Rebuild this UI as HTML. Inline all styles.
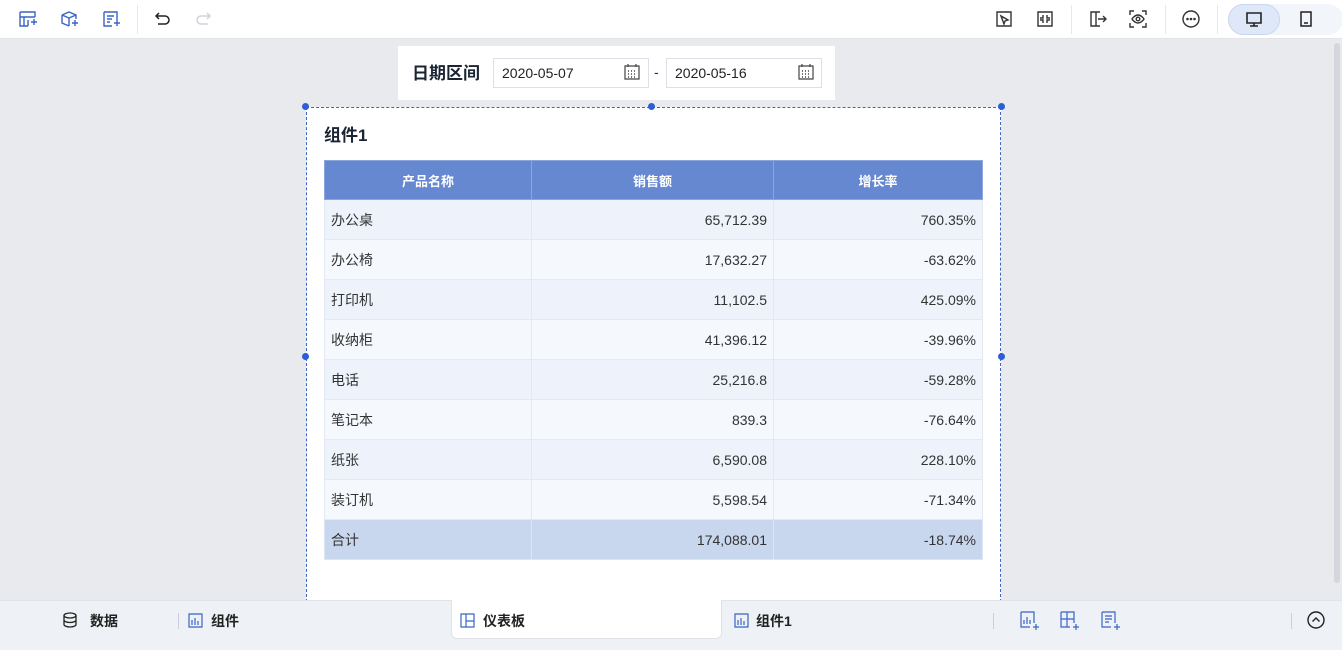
<!DOCTYPE html>
<html><head><meta charset="utf-8"><style>
*{margin:0;padding:0;box-sizing:border-box}
body{width:1342px;height:650px;overflow:hidden;background:#e9eaed;font-family:"Liberation Sans","Noto Sans CJK SC",sans-serif;position:relative;color:#1f2d3d}
.abs{position:absolute}
#top{left:0;top:0;width:1342px;height:39px;background:#fff;border-bottom:1px solid #e2e4e8}
.ic{position:absolute;top:10px;width:18px;height:18px}
.sep{position:absolute;top:5px;width:1px;height:29px;background:#e6e8ec}
#filter{left:398px;top:46px;width:437px;height:54px;background:#fff}
.inp{position:absolute;top:12px;height:30px;border:1px solid #dcdfe6;background:#fff;font-size:14px;line-height:28px;padding-left:8px;color:#222}
#comp{left:306px;top:107px;width:695px;height:500px;background:#fff;border:1px dashed #3f66c6;border-bottom:none}
.dot{position:absolute;width:7px;height:7px;border-radius:50%;background:#2b5fd9}
table{position:absolute;left:324px;top:160px;border-collapse:collapse;font-size:14px;color:#333}
td,th{height:40px;border:1px solid #e3e9f4;padding:0 6px}
th{background:#6688d1;color:#fff;font-weight:bold;font-size:13px;height:39px;border-color:#8ba5dd}
tr.a td{background:#edf2fb}tr.b td{background:#f5f8fd}tr.t td{background:#c8d6ee;border-color:#dde6f5}
td.r{text-align:right}
#bot{left:0;top:600px;width:1342px;height:50px;background:#eef1f5;border-top:1px solid #dfe3e8}
.bt{position:absolute;top:10px;font-size:14px;font-weight:bold;color:#222;line-height:20px}
</style></head><body>
<div id="top" class="abs">
<svg class="ic" style="left:19px" viewBox="0 0 18 18" fill="none" stroke="#3a64c8" stroke-width="1.4"><path d="M1 2h15v5M1 2v14h8M1 7h15M5 7v9M9 10v6M12 12h6M15 9v6"/></svg>
<svg class="ic" style="left:60px" viewBox="0 0 18 18" fill="none" stroke="#3a64c8" stroke-width="1.4"><path d="M2 5l7-3 7 3v4M2 5v8l7 3M2 5l7 3 7-3M9 8v8M12 13h6M15 10v6"/></svg>
<svg class="ic" style="left:102px" viewBox="0 0 18 18" fill="none" stroke="#3a64c8" stroke-width="1.4"><path d="M2 2h13v8M2 2v14h8M5 6h7M5 9h5M5 12h3M12 13h6M15 10v6"/></svg>
<div class="sep" style="left:137px"></div>
<svg class="ic" style="left:154px" viewBox="0 0 18 18" fill="none" stroke="#222" stroke-width="1.5"><path d="M5 3L2 6l3 3M2 6h9a4 4 0 010 8H4"/></svg>
<svg class="ic" style="left:194px" viewBox="0 0 18 18" fill="none" stroke="#cfd3da" stroke-width="1.5"><path d="M13 3l3 3-3 3M16 6H7a4 4 0 000 8h7"/></svg>
<svg class="ic" style="left:995px" viewBox="0 0 18 18" fill="none" stroke="#333" stroke-width="1.4"><path d="M2 2h14v14H2zM6 6l3 8 1-3 3-1z"/></svg>
<svg class="ic" style="left:1036px" viewBox="0 0 18 18" fill="none" stroke="#333" stroke-width="1.4"><path d="M2 2h14v14H2zM7 5v3H4M11 5v3h3M7 13v-3H4M11 13v-3h3"/></svg>
<div class="sep" style="left:1071px"></div>
<svg class="ic" style="left:1089px" viewBox="0 0 18 18" fill="none" stroke="#333" stroke-width="1.4"><path d="M2 2h5v14H2zM7 2h4M7 16h4M9 9h8M14 6l3 3-3 3"/></svg>
<svg class="ic" style="left:1129px" viewBox="0 0 18 18" fill="none" stroke="#333" stroke-width="1.4"><path d="M1 5V1h4M13 1h4v4M1 13v4h4M13 17h4v-4M3 9s2.5-4 6-4 6 4 6 4-2.5 4-6 4-6-4-6-4z"/><circle cx="9" cy="9" r="1.8"/></svg>
<div class="sep" style="left:1165px"></div>
<svg class="ic" style="left:1182px" viewBox="0 0 18 18" fill="none" stroke="#333" stroke-width="1.4"><circle cx="9" cy="9" r="8"/><circle cx="5.5" cy="9" r=".6" fill="#333"/><circle cx="9" cy="9" r=".6" fill="#333"/><circle cx="12.5" cy="9" r=".6" fill="#333"/></svg>
<div class="sep" style="left:1217px"></div>
<div class="abs" style="left:1228px;top:4px;width:115px;height:31px;border-radius:16px;background:#f2f5fa"></div>
<div class="abs" style="left:1228px;top:4px;width:52px;height:31px;border-radius:16px;background:#dfe8f8;border:1px solid #c8d6f0"></div>
<svg class="ic" style="left:1245px" viewBox="0 0 18 18" fill="none" stroke="#222" stroke-width="1.6"><path d="M2 3h14v10H2zM9 13v3M5 16h8"/></svg>
<svg class="ic" style="left:1297px" viewBox="0 0 18 18" fill="none" stroke="#222" stroke-width="1.5"><path d="M4 2h10v14H4zM7 13h4"/></svg>
</div>
<div class="abs" style="left:1334px;top:43px;width:6px;height:540px;background:#d3d6da;border-radius:3px"></div>

<div id="filter" class="abs">
<div class="abs" style="left:14px;top:13px;font-size:17px;font-weight:bold;color:#1a2433">日期区间</div>
<div class="inp" style="left:95px;width:156px">2020-05-07</div>
<svg class="abs" style="left:226px;top:18px" width="16" height="16" viewBox="0 0 16 16" fill="none" stroke="#444" stroke-width="1.2"><path d="M1 2h14v13H1zM4 0v3M12 0v3"/><path d="M4 7h1M7 7h1M10 7h1M4 10h1M7 10h1M10 10h1M4 13h1M7 13h1M10 13h1" stroke-width="1.5"/></svg>
<div class="abs" style="left:256px;top:18px;font-size:14px">-</div>
<div class="inp" style="left:268px;width:156px">2020-05-16</div>
<svg class="abs" style="left:400px;top:18px" width="16" height="16" viewBox="0 0 16 16" fill="none" stroke="#444" stroke-width="1.2"><path d="M1 2h14v13H1zM4 0v3M12 0v3"/><path d="M4 7h1M7 7h1M10 7h1M4 10h1M7 10h1M10 10h1M4 13h1M7 13h1M10 13h1" stroke-width="1.5"/></svg>
</div>

<div id="comp" class="abs"></div>
<div class="dot" style="left:302px;top:103px"></div>
<div class="dot" style="left:648px;top:103px"></div>
<div class="dot" style="left:998px;top:103px"></div>
<div class="dot" style="left:302px;top:353px"></div>
<div class="dot" style="left:998px;top:353px"></div>
<div class="abs" style="left:324px;top:121px;font-size:17px;font-weight:bold;color:#1a2433">组件1</div>
<table>
<tr><th style="width:207px">产品名称</th><th style="width:242px">销售额</th><th style="width:209px">增长率</th></tr>
<tr class="a"><td>办公桌</td><td class="r">65,712.39</td><td class="r">760.35%</td></tr>
<tr class="b"><td>办公椅</td><td class="r">17,632.27</td><td class="r">-63.62%</td></tr>
<tr class="a"><td>打印机</td><td class="r">11,102.5</td><td class="r">425.09%</td></tr>
<tr class="b"><td>收纳柜</td><td class="r">41,396.12</td><td class="r">-39.96%</td></tr>
<tr class="a"><td>电话</td><td class="r">25,216.8</td><td class="r">-59.28%</td></tr>
<tr class="b"><td>笔记本</td><td class="r">839.3</td><td class="r">-76.64%</td></tr>
<tr class="a"><td>纸张</td><td class="r">6,590.08</td><td class="r">228.10%</td></tr>
<tr class="b"><td>装订机</td><td class="r">5,598.54</td><td class="r">-71.34%</td></tr>
<tr class="t"><td>合计</td><td class="r">174,088.01</td><td class="r">-18.74%</td></tr>
</table>

<div id="bot" class="abs">
<svg class="abs" style="left:62px;top:11px" width="16" height="16" viewBox="0 0 16 16" fill="none" stroke="#222" stroke-width="1.3"><ellipse cx="8" cy="3.5" rx="6" ry="2.5"/><path d="M2 3.5v9c0 1.4 2.7 2.5 6 2.5s6-1.1 6-2.5v-9M2 8c0 1.4 2.7 2.5 6 2.5s6-1.1 6-2.5"/></svg>
<div class="bt" style="left:90px">数据</div>
<div class="abs" style="left:178px;top:12px;width:1px;height:16px;background:#ccd"></div>
<svg class="abs" style="left:188px;top:12px" width="15" height="15" viewBox="0 0 15 15" fill="none" stroke="#3a64c8" stroke-width="1.2"><path d="M1 1h13v13H1zM4 12V7M7 12V5M10 12V8"/></svg>
<div class="bt" style="left:211px">组件</div>
<div class="abs" style="left:451px;top:-1px;width:271px;height:39px;background:#fff;border-radius:0 0 6px 6px;border:1px solid #dfe3e8;border-top:none"></div>
<svg class="abs" style="left:460px;top:12px" width="15" height="15" viewBox="0 0 15 15" fill="none" stroke="#3a64c8" stroke-width="1.2"><path d="M1 1h13v13H1zM6 1v13M6 8h8"/></svg>
<div class="bt" style="left:483px">仪表板</div>
<svg class="abs" style="left:734px;top:12px" width="15" height="15" viewBox="0 0 15 15" fill="none" stroke="#3a64c8" stroke-width="1.2"><path d="M1 1h13v13H1zM4 12V7M7 12V5M10 12V8"/></svg>
<div class="bt" style="left:756px">组件1</div>
<div class="abs" style="left:993px;top:12px;width:1px;height:16px;background:#ccd"></div>
<svg class="abs" style="left:1020px;top:10px" width="20" height="20" viewBox="0 0 20 20" fill="none" stroke="#3a64c8" stroke-width="1.2"><path d="M1 1h13v11M1 1v15h9M4 13V9M7 13V6M10 13V9M13 16h6M16 13v6"/></svg>
<svg class="abs" style="left:1060px;top:10px" width="20" height="20" viewBox="0 0 20 20" fill="none" stroke="#3a64c8" stroke-width="1.2"><path d="M1 1h13v11M1 1v15h9M7 1v15M1 8h13M13 16h6M16 13v6"/></svg>
<svg class="abs" style="left:1101px;top:10px" width="20" height="20" viewBox="0 0 20 20" fill="none" stroke="#3a64c8" stroke-width="1.2"><path d="M1 1h13v11M1 1v15h9M4 5h7M4 8h7M4 11h4M13 16h6M16 13v6"/></svg>
<div class="abs" style="left:1291px;top:12px;width:1px;height:16px;background:#ccd"></div>
<svg class="abs" style="left:1307px;top:10px" width="18" height="18" viewBox="0 0 18 18" fill="none" stroke="#222" stroke-width="1.4"><circle cx="9" cy="9" r="8"/><path d="M5.5 10.5L9 7l3.5 3.5"/></svg>
</div>
</body></html>
